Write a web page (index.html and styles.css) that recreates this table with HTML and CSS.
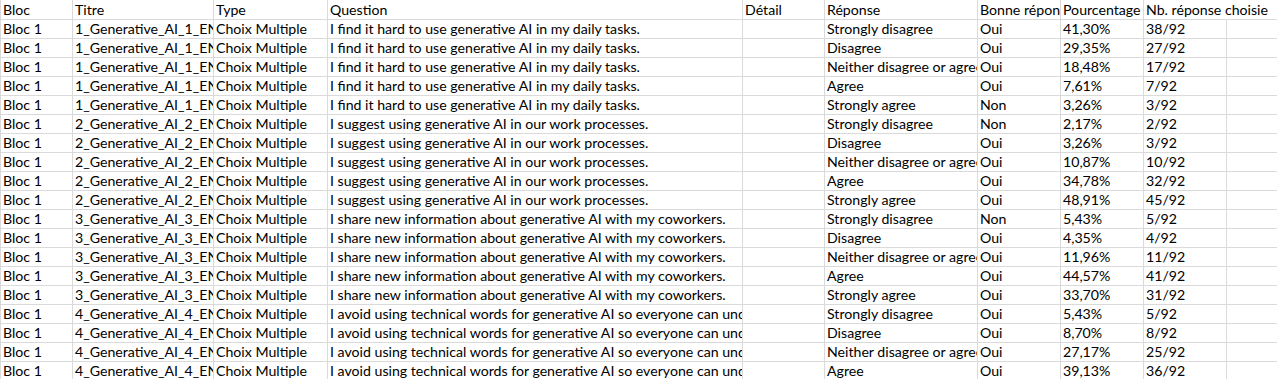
FILE: index.html
```html
<!DOCTYPE html>
<html lang="fr">
<head>
<meta charset="utf-8">
<title>Feuille</title>
<link rel="stylesheet" href="styles.css">
</head>
<body>
<div class="sheet">
  <div class="c h">Bloc</div><div class="c h">Titre</div><div class="c h">Type</div><div class="c h">Question</div><div class="c h">Détail</div><div class="c h">Réponse</div><div class="c h">Bonne réponse</div><div class="c h">Pourcentage</div><div class="c h spill">Nb. réponse choisie</div><div class="c h last"></div>

  <div class="c">Bloc 1</div><div class="c">1_Generative_AI_1_EN</div><div class="c">Choix Multiple</div><div class="c">I find it hard to use generative AI in my daily tasks.</div><div class="c"></div><div class="c">Strongly disagree</div><div class="c">Oui</div><div class="c">41,30%</div><div class="c">38/92</div><div class="c last"></div>
  <div class="c">Bloc 1</div><div class="c">1_Generative_AI_1_EN</div><div class="c">Choix Multiple</div><div class="c">I find it hard to use generative AI in my daily tasks.</div><div class="c"></div><div class="c">Disagree</div><div class="c">Oui</div><div class="c">29,35%</div><div class="c">27/92</div><div class="c last"></div>
  <div class="c">Bloc 1</div><div class="c">1_Generative_AI_1_EN</div><div class="c">Choix Multiple</div><div class="c">I find it hard to use generative AI in my daily tasks.</div><div class="c"></div><div class="c">Neither disagree or agree</div><div class="c">Oui</div><div class="c">18,48%</div><div class="c">17/92</div><div class="c last"></div>
  <div class="c">Bloc 1</div><div class="c">1_Generative_AI_1_EN</div><div class="c">Choix Multiple</div><div class="c">I find it hard to use generative AI in my daily tasks.</div><div class="c"></div><div class="c">Agree</div><div class="c">Oui</div><div class="c">7,61%</div><div class="c">7/92</div><div class="c last"></div>
  <div class="c">Bloc 1</div><div class="c">1_Generative_AI_1_EN</div><div class="c">Choix Multiple</div><div class="c">I find it hard to use generative AI in my daily tasks.</div><div class="c"></div><div class="c">Strongly agree</div><div class="c">Non</div><div class="c">3,26%</div><div class="c">3/92</div><div class="c last"></div>

  <div class="c">Bloc 1</div><div class="c">2_Generative_AI_2_EN</div><div class="c">Choix Multiple</div><div class="c">I suggest using generative AI in our work processes.</div><div class="c"></div><div class="c">Strongly disagree</div><div class="c">Non</div><div class="c">2,17%</div><div class="c">2/92</div><div class="c last"></div>
  <div class="c">Bloc 1</div><div class="c">2_Generative_AI_2_EN</div><div class="c">Choix Multiple</div><div class="c">I suggest using generative AI in our work processes.</div><div class="c"></div><div class="c">Disagree</div><div class="c">Oui</div><div class="c">3,26%</div><div class="c">3/92</div><div class="c last"></div>
  <div class="c">Bloc 1</div><div class="c">2_Generative_AI_2_EN</div><div class="c">Choix Multiple</div><div class="c">I suggest using generative AI in our work processes.</div><div class="c"></div><div class="c">Neither disagree or agree</div><div class="c">Oui</div><div class="c">10,87%</div><div class="c">10/92</div><div class="c last"></div>
  <div class="c">Bloc 1</div><div class="c">2_Generative_AI_2_EN</div><div class="c">Choix Multiple</div><div class="c">I suggest using generative AI in our work processes.</div><div class="c"></div><div class="c">Agree</div><div class="c">Oui</div><div class="c">34,78%</div><div class="c">32/92</div><div class="c last"></div>
  <div class="c">Bloc 1</div><div class="c">2_Generative_AI_2_EN</div><div class="c">Choix Multiple</div><div class="c">I suggest using generative AI in our work processes.</div><div class="c"></div><div class="c">Strongly agree</div><div class="c">Oui</div><div class="c">48,91%</div><div class="c">45/92</div><div class="c last"></div>

  <div class="c">Bloc 1</div><div class="c">3_Generative_AI_3_EN</div><div class="c">Choix Multiple</div><div class="c">I share new information about generative AI with my coworkers.</div><div class="c"></div><div class="c">Strongly disagree</div><div class="c">Non</div><div class="c">5,43%</div><div class="c">5/92</div><div class="c last"></div>
  <div class="c">Bloc 1</div><div class="c">3_Generative_AI_3_EN</div><div class="c">Choix Multiple</div><div class="c">I share new information about generative AI with my coworkers.</div><div class="c"></div><div class="c">Disagree</div><div class="c">Oui</div><div class="c">4,35%</div><div class="c">4/92</div><div class="c last"></div>
  <div class="c">Bloc 1</div><div class="c">3_Generative_AI_3_EN</div><div class="c">Choix Multiple</div><div class="c">I share new information about generative AI with my coworkers.</div><div class="c"></div><div class="c">Neither disagree or agree</div><div class="c">Oui</div><div class="c">11,96%</div><div class="c">11/92</div><div class="c last"></div>
  <div class="c">Bloc 1</div><div class="c">3_Generative_AI_3_EN</div><div class="c">Choix Multiple</div><div class="c">I share new information about generative AI with my coworkers.</div><div class="c"></div><div class="c">Agree</div><div class="c">Oui</div><div class="c">44,57%</div><div class="c">41/92</div><div class="c last"></div>
  <div class="c">Bloc 1</div><div class="c">3_Generative_AI_3_EN</div><div class="c">Choix Multiple</div><div class="c">I share new information about generative AI with my coworkers.</div><div class="c"></div><div class="c">Strongly agree</div><div class="c">Oui</div><div class="c">33,70%</div><div class="c">31/92</div><div class="c last"></div>

  <div class="c">Bloc 1</div><div class="c">4_Generative_AI_4_EN</div><div class="c">Choix Multiple</div><div class="c">I avoid using technical words for generative AI so everyone can understand.</div><div class="c"></div><div class="c">Strongly disagree</div><div class="c">Oui</div><div class="c">5,43%</div><div class="c">5/92</div><div class="c last"></div>
  <div class="c">Bloc 1</div><div class="c">4_Generative_AI_4_EN</div><div class="c">Choix Multiple</div><div class="c">I avoid using technical words for generative AI so everyone can understand.</div><div class="c"></div><div class="c">Disagree</div><div class="c">Oui</div><div class="c">8,70%</div><div class="c">8/92</div><div class="c last"></div>
  <div class="c">Bloc 1</div><div class="c">4_Generative_AI_4_EN</div><div class="c">Choix Multiple</div><div class="c">I avoid using technical words for generative AI so everyone can understand.</div><div class="c"></div><div class="c">Neither disagree or agree</div><div class="c">Oui</div><div class="c">27,17%</div><div class="c">25/92</div><div class="c last"></div>
  <div class="c">Bloc 1</div><div class="c">4_Generative_AI_4_EN</div><div class="c">Choix Multiple</div><div class="c">I avoid using technical words for generative AI so everyone can understand.</div><div class="c"></div><div class="c">Agree</div><div class="c">Oui</div><div class="c">39,13%</div><div class="c">36/92</div><div class="c last"></div>
</div>
</body>
</html>
```
FILE: styles.css
```css
html, body {
  margin: 0;
  padding: 0;
  overflow: hidden;
  background: #ffffff;
}

.sheet {
  display: grid;
  grid-template-columns: 72px 141px 114px 415px 82px 153px 83px 83px 83px 1fr;
  grid-template-rows: 20px;
  grid-auto-rows: 19px;
  width: 1277px;
  border-left: 1px solid #dadada;
  box-sizing: border-box;
  font-family: Lato, "Liberation Sans", sans-serif;
  font-size: 14.15px;
  color: #000000;
}

.c {
  box-sizing: border-box;
  border-right: 1px solid #dadada;
  border-bottom: 1px solid #dadada;
  padding-left: 2px;
  line-height: 17px;
  white-space: nowrap;
  overflow: hidden;
}

.h {
  padding-top: 1px;
}

.spill {
  overflow: visible;
  border-right-color: transparent;
  position: relative;
  z-index: 1;
}

.last {
  border-right: none;
}
```
